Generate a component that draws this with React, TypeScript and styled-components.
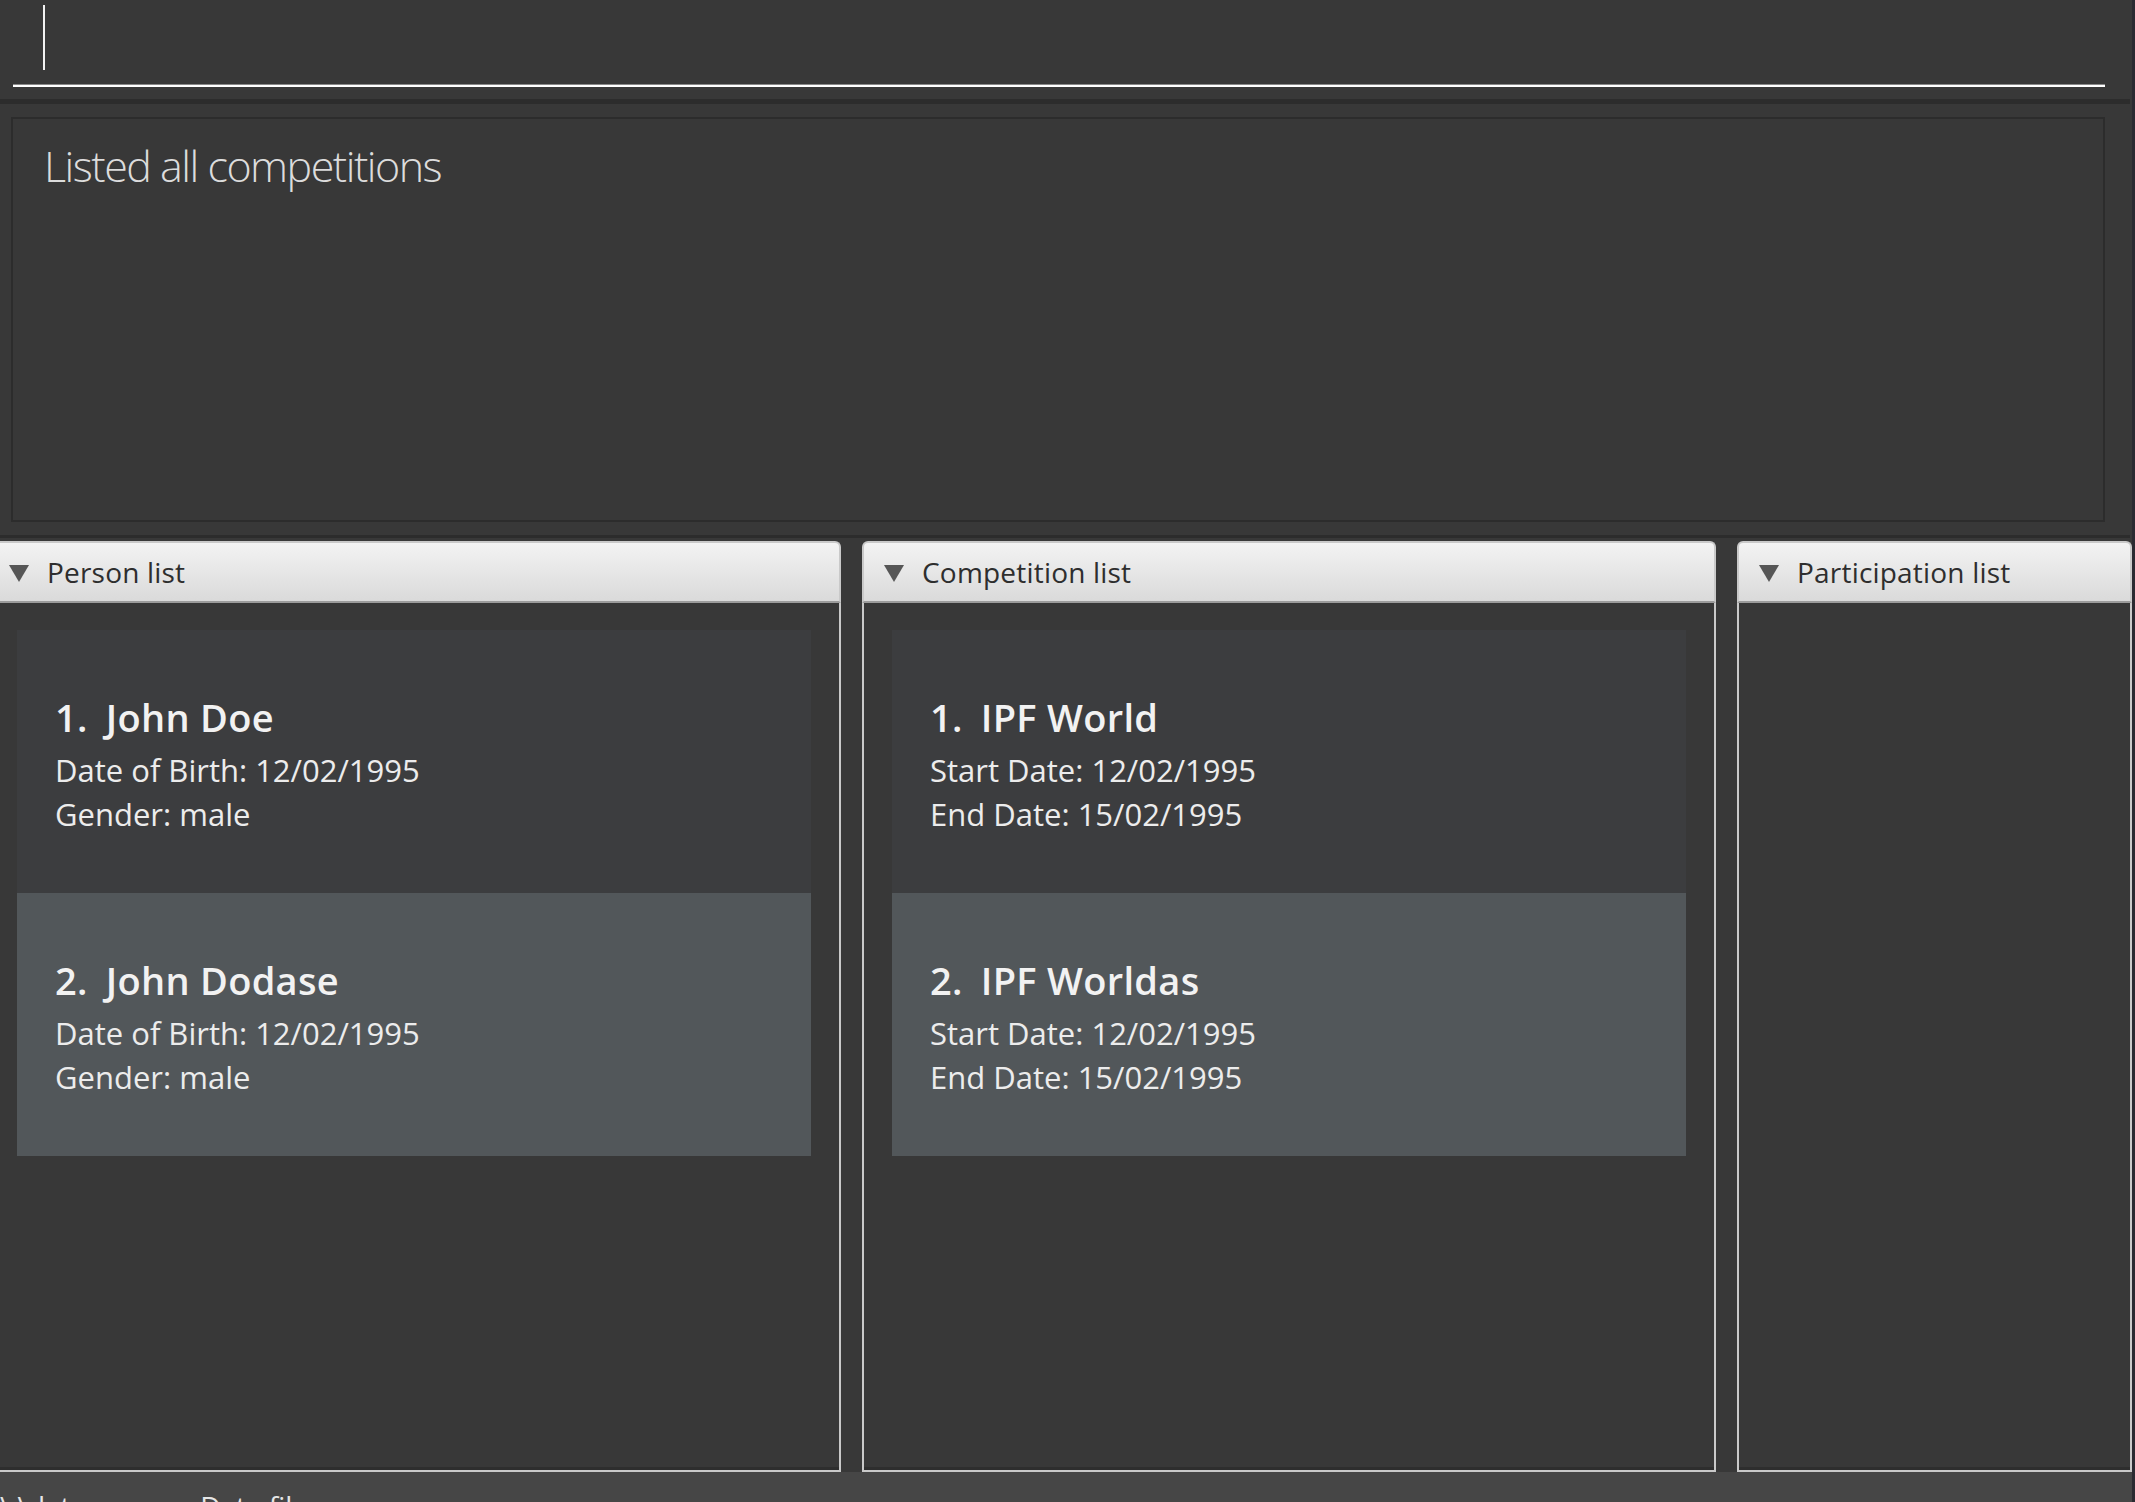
import styled, { createGlobalStyle } from "styled-components";

const GlobalStyle = createGlobalStyle`
  html, body {
    margin: 0;
    padding: 0;
    width: 100%;
    height: 100%;
    overflow: hidden;
    background-color: #383838;
  }
  body {
    font-family: "Open Sans", "Noto Sans", sans-serif;
  }
`;

const S_Window = styled.div`
  display: flex;
  flex-direction: column;
  height: 1502px;
  background-color: #383838;
  border-right: 3px solid #2a2a31;
  overflow: hidden;
`;

const S_CommandBar = styled.div`
  height: 99px;
  padding: 0 27px 0 13px;
`;

const S_CommandField = styled.div`
  height: 87px;
  box-sizing: border-box;
  border-bottom: 2px solid #ffffff;
  box-shadow: 0 -1px 0 #8a8a8a inset;
  padding-left: 30px;
  padding-top: 5px;
`;

const S_Caret = styled.span`
  display: block;
  width: 2px;
  height: 65px;
  background-color: #f2f2f2;
`;

const S_Divider = styled.div<{ $h: number }>`
  height: ${(p) => p.$h}px;
  background-color: #2c2c2c;
  margin-right: 2px;
`;

const S_ResultArea = styled.div`
  padding: 13px 27px 13px 11px;
`;

const S_ResultBox = styled.div`
  height: 405px;
  box-sizing: border-box;
  border: 2px solid #2c2c2c;
  padding: 16px 31px;
  color: #dcdcdc;
  font-size: 43px;
  font-weight: 300;
  line-height: 62px;
  letter-spacing: -1.5px;
`;

const S_ListsRow = styled.div`
  flex: 1;
  display: flex;
  gap: 21px;
  margin-left: -13px;
  padding-top: 3px;
  min-height: 0;
`;

const S_Panel = styled.section<{ $grow?: boolean }>`
  display: flex;
  flex-direction: column;
  width: ${(p) => (p.$grow ? "auto" : "854px")};
  flex: ${(p) => (p.$grow ? "1" : "none")};
`;

const S_PanelHeader = styled.div`
  height: 62px;
  box-sizing: border-box;
  display: flex;
  align-items: center;
  padding-left: 20px;
  gap: 18px;
  border: 2px solid #c9c9c9;
  border-bottom: 2px solid #9c9c9c;
  border-radius: 6px 6px 0 0;
  background: linear-gradient(#f3f3f3, #dadada);
  color: #2e2e2e;
  font-size: 28px;
  letter-spacing: 0.2px;
`;

const S_Arrow = styled.span`
  width: 0;
  height: 0;
  border-left: 10px solid transparent;
  border-right: 10px solid transparent;
  border-top: 17px solid #565656;
  margin-top: 2px;
`;

const S_PanelBody = styled.div`
  flex: 1;
  display: flex;
  flex-direction: column;
  border: 2px solid #c9c9c9;
  border-top: none;
  background-color: #383838;
  box-shadow: inset 0 -3px 0 #2e2e2e;
  padding: 27px 28px 0;
`;

const S_Card = styled.div<{ $selected?: boolean }>`
  height: 263px;
  box-sizing: border-box;
  padding: 62px 38px 0;
  background-color: ${(p) => (p.$selected ? "#52575a" : "#3c3d3f")};
  color: #f2f2f2;
`;

const S_CardTitle = styled.div`
  display: flex;
  gap: 18px;
  font-size: 38px;
  font-weight: 600;
  line-height: 50px;
  letter-spacing: 0.3px;
  margin-bottom: 6px;
`;

const S_CardLine = styled.div`
  font-size: 31px;
  line-height: 44px;
  letter-spacing: 0;
  color: #ececec;
`;

const S_StatusBar = styled.div`
  height: 30px;
  box-sizing: border-box;
  flex: none;
  display: flex;
  gap: 114px;
  background-color: #464646;
  padding-top: 15px;
  color: #e6e6e6;
  font-size: 28px;
  line-height: 38px;
  white-space: nowrap;
`;

type Person = { id: number; name: string; dob: string; gender: string };
type Competition = { id: number; name: string; start: string; end: string };

const persons: Person[] = [
  { id: 1, name: "John Doe", dob: "12/02/1995", gender: "male" },
  { id: 2, name: "John Dodase", dob: "12/02/1995", gender: "male" },
];

const competitions: Competition[] = [
  { id: 1, name: "IPF World", start: "12/02/1995", end: "15/02/1995" },
  { id: 2, name: "IPF Worldas", start: "12/02/1995", end: "15/02/1995" },
];

const PanelHeader = ({ title }: { title: string }) => (
  <S_PanelHeader>
    <S_Arrow />
    <span>{title}</span>
  </S_PanelHeader>
);

const App = () => {
  return (
    <>
      <GlobalStyle />
      <S_Window>
        <S_CommandBar>
          <S_CommandField>
            <S_Caret />
          </S_CommandField>
        </S_CommandBar>
        <S_Divider $h={5} />
        <S_ResultArea>
          <S_ResultBox>Listed all competitions</S_ResultBox>
        </S_ResultArea>
        <S_Divider $h={3} />
        <S_ListsRow>
          <S_Panel>
            <PanelHeader title="Person list" />
            <S_PanelBody>
              {persons.map((p, i) => (
                <S_Card key={p.id} $selected={i === 1}>
                  <S_CardTitle>
                    <span>{p.id}.</span>
                    <span>{p.name}</span>
                  </S_CardTitle>
                  <S_CardLine>Date of Birth: {p.dob}</S_CardLine>
                  <S_CardLine>Gender: {p.gender}</S_CardLine>
                </S_Card>
              ))}
            </S_PanelBody>
          </S_Panel>
          <S_Panel>
            <PanelHeader title="Competition list" />
            <S_PanelBody>
              {competitions.map((c, i) => (
                <S_Card key={c.id} $selected={i === 1}>
                  <S_CardTitle>
                    <span>{c.id}.</span>
                    <span>{c.name}</span>
                  </S_CardTitle>
                  <S_CardLine>Start Date: {c.start}</S_CardLine>
                  <S_CardLine>End Date: {c.end}</S_CardLine>
                </S_Card>
              ))}
            </S_PanelBody>
          </S_Panel>
          <S_Panel $grow>
            <PanelHeader title="Participation list" />
            <S_PanelBody />
          </S_Panel>
        </S_ListsRow>
        <S_StatusBar>
          <span>\.\data</span>
          <span>Data file</span>
        </S_StatusBar>
      </S_Window>
    </>
  );
};

export default App;
